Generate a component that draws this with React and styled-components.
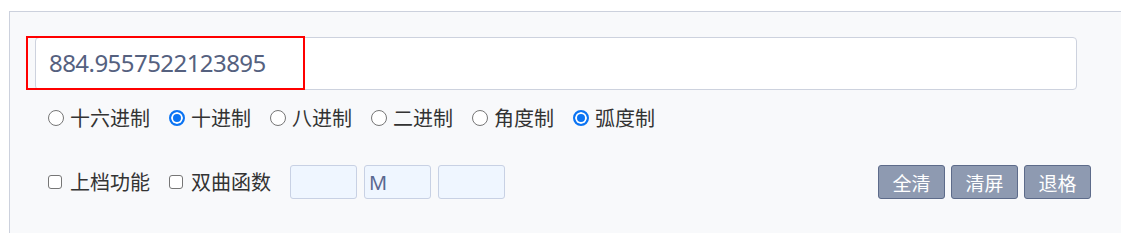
import styled, { createGlobalStyle } from "styled-components";

const GlobalStyle = createGlobalStyle`
  html, body {
    margin: 0;
    padding: 0;
    background: #ffffff;
    overflow: hidden;
  }
  body {
    font-family: "Noto Sans", "Noto Sans CJK SC", sans-serif;
  }
`;

const Panel = styled.div`
  margin: 11px 0 0 9px;
  min-height: 222px;
  box-sizing: border-box;
  background: #f8f9fb;
  border-top: 1px solid #ccd1dd;
  border-left: 1px solid #ccd1dd;
  padding: 25px 30px 0 25px;
`;

const Display = styled.div`
  position: relative;
  width: 1042px;
  height: 53px;
`;

const DisplayInput = styled.input`
  width: 100%;
  height: 100%;
  box-sizing: border-box;
  border: 1px solid #cdd2de;
  border-radius: 4px;
  background: #ffffff;
  padding: 0 0 2px 13px;
  font-family: "Noto Sans", "Noto Sans CJK SC", sans-serif;
  font-size: 24px;
  letter-spacing: -0.55px;
  color: #55617f;
  outline: none;
`;

const Highlight = styled.div`
  position: absolute;
  left: -9px;
  top: -1px;
  width: 279px;
  height: 54px;
  box-sizing: border-box;
  border: 2px solid #ff0000;
  pointer-events: none;
`;

const Row = styled.div`
  display: flex;
  align-items: center;
  gap: 19px;
  padding-left: 13px;
  margin-top: ${(p) => p.top}px;
  height: ${(p) => p.height}px;
`;

const Option = styled.label`
  display: flex;
  align-items: center;
  gap: ${(p) => p.gap || 8}px;
  font-family: "Noto Sans CJK SC", sans-serif;
  font-size: 20px;
  line-height: 26px;
  color: #333333;
  white-space: nowrap;
`;

const Radio = styled.input.attrs({ type: "radio" })`
  appearance: none;
  flex-shrink: 0;
  width: 16px;
  height: 16px;
  margin: 0;
  box-sizing: border-box;
  border: 1px solid #767676;
  border-radius: 50%;
  background: #ffffff;

  &:checked {
    border: 2px solid #0b74f3;
    background: #0b74f3;
    box-shadow: inset 0 0 0 2px #ffffff;
  }
`;

const Check = styled.input.attrs({ type: "checkbox" })`
  appearance: none;
  flex-shrink: 0;
  width: 14px;
  height: 14px;
  margin: 0;
  box-sizing: border-box;
  border: 1px solid #767676;
  border-radius: 3px;
  background: #ffffff;
`;

const Memory = styled.input`
  width: 67px;
  height: 34px;
  box-sizing: border-box;
  border: 1px solid #c8d1e4;
  border-radius: 3px;
  background: #eff6ff;
  padding: 0 0 0 4px;
  font-family: "Noto Sans", sans-serif;
  font-size: 20px;
  color: #5a6890;
  outline: none;
`;

const MemoryGroup = styled.div`
  display: flex;
  gap: 7px;
`;

const Actions = styled.div`
  display: flex;
  gap: 6px;
  margin-left: auto;
`;

const Button = styled.button`
  width: 67px;
  height: 34px;
  box-sizing: border-box;
  border: 1px solid #5d6b8a;
  border-radius: 3px;
  background: #8e9ab1;
  color: #ffffff;
  font-family: "Noto Sans CJK SC", sans-serif;
  font-size: 19px;
  padding: 0;
  cursor: pointer;
`;

const bases = [
  { label: "十六进制", checked: false },
  { label: "十进制", checked: true },
  { label: "八进制", checked: false },
  { label: "二进制", checked: false },
];
const angles = [
  { label: "角度制", checked: false },
  { label: "弧度制", checked: true },
];

export default function App() {
  return (
    <>
      <GlobalStyle />
      <Panel>
        <Display>
          <DisplayInput defaultValue="884.9557522123895" />
          <Highlight />
        </Display>
        <Row top={15} height={26}>
          {bases.map((b) => (
            <Option key={b.label} gap={6}>
              <Radio name="base" defaultChecked={b.checked} />
              {b.label}
            </Option>
          ))}
          {angles.map((a) => (
            <Option key={a.label} gap={6}>
              <Radio name="angle" defaultChecked={a.checked} />
              {a.label}
            </Option>
          ))}
        </Row>
        <Row top={34} height={34}>
          <Option>
            <Check />
            上档功能
          </Option>
          <Option>
            <Check />
            双曲函数
          </Option>
          <MemoryGroup>
            <Memory defaultValue="" />
            <Memory defaultValue="M" />
            <Memory defaultValue="" />
          </MemoryGroup>
          <Actions>
            <Button>全清</Button>
            <Button>清屏</Button>
            <Button>退格</Button>
          </Actions>
        </Row>
      </Panel>
    </>
  );
}
